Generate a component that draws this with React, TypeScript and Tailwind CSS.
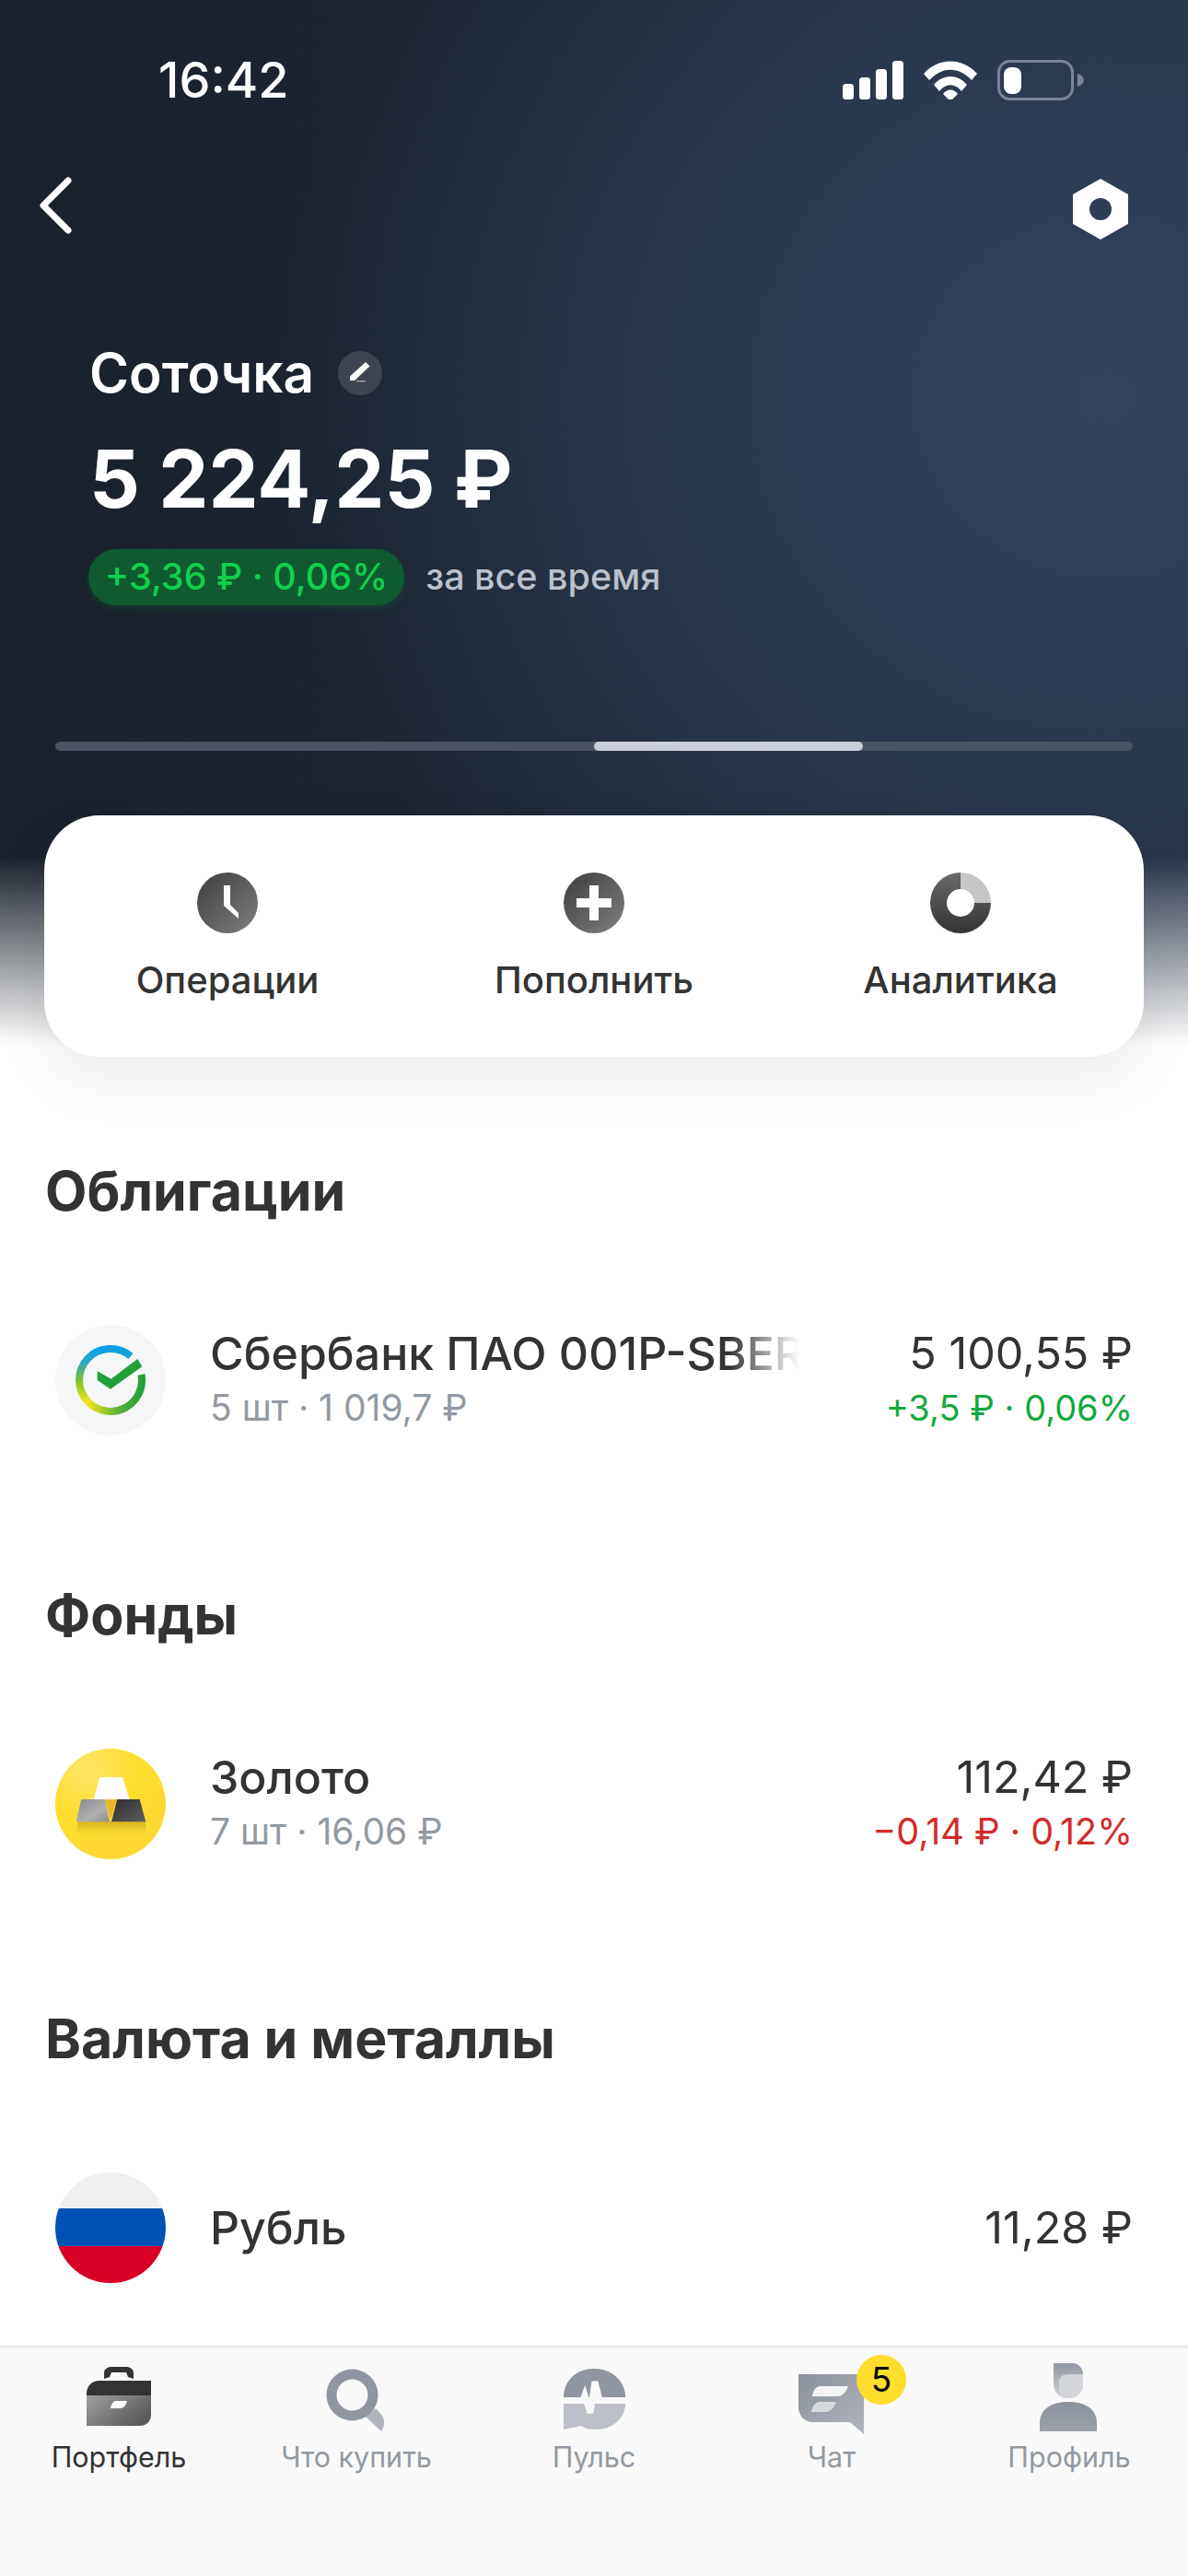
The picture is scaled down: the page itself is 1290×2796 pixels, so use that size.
const font = "font-['Inter','Noto_Sans',sans-serif]";

function StatusIcons() {
  return (
    <div className="flex items-center gap-[22px]">
      <svg width="66" height="42" viewBox="0 0 66 42" fill="#fff">
        <rect x="0" y="25" width="12" height="17" rx="3.5" />
        <rect x="18" y="18" width="12" height="24" rx="3.5" />
        <rect x="36" y="9" width="12" height="33" rx="3.5" />
        <rect x="54" y="0" width="12" height="42" rx="3.5" />
      </svg>
      <svg width="58" height="42" viewBox="0 0 58 42" fill="#fff">
        <path d="M0 14 C16 -4 42 -4 58 14 L52 21 C38 6 20 6 6 21 Z" />
        <path d="M11 26 C21 14 37 14 47 26 L41 33 C34 24 24 24 17 33 Z" />
        <path d="M21 36 C25 30 33 30 37 36 L29 44 Z" />
      </svg>
      <svg width="94" height="44" viewBox="0 0 94 44" fill="none">
        <rect x="1.5" y="1.5" width="80" height="41" rx="12" stroke="#7a8494" strokeWidth="3" />
        <rect x="7" y="8" width="19" height="29" rx="8" fill="#fff" />
        <path d="M87 15 C91 16 94 19 94 22 C94 25 91 28 87 29 Z" fill="#7a8494" />
      </svg>
    </div>
  );
}

function ClockIcon() {
  return (
    <svg width="66" height="66" viewBox="0 0 66 66">
      <defs>
        <linearGradient id="op" x1="0" y1="0" x2="1" y2="1">
          <stop offset="0" stopColor="#3d3d3f" />
          <stop offset="1" stopColor="#808082" />
        </linearGradient>
      </defs>
      <circle cx="33" cy="33" r="33" fill="url(#op)" />
      <path d="M29 14 H36 V35 L45 44 V50 L29 36 Z" fill="#fff" />
    </svg>
  );
}

function PlusIcon() {
  return (
    <svg width="66" height="66" viewBox="0 0 66 66">
      <defs>
        <linearGradient id="pl" x1="0" y1="0" x2="1" y2="1">
          <stop offset="0" stopColor="#3d3d3f" />
          <stop offset="1" stopColor="#808082" />
        </linearGradient>
      </defs>
      <circle cx="33" cy="33" r="33" fill="url(#pl)" />
      <path d="M28 14 H38 V28 H52 V38 H38 V52 H28 V38 H14 V28 H28 Z" fill="#fff" />
    </svg>
  );
}

function DonutIcon() {
  return (
    <svg width="66" height="66" viewBox="0 0 66 66">
      <defs>
        <linearGradient id="dn" x1="0" y1="0" x2="0" y2="1">
          <stop offset="0" stopColor="#6a6a6c" />
          <stop offset="1" stopColor="#333335" />
        </linearGradient>
      </defs>
      <path fillRule="evenodd" d="M33 0 V18 A15 15 0 1 0 48 33 H66 A33 33 0 1 1 33 0 Z" fill="url(#dn)" />
      <path d="M33 0 A33 33 0 0 1 66 33 H48 A15 15 0 0 0 33 18 Z" fill="#c6c6c6" />
    </svg>
  );
}

function SberLogo() {
  return (
    <svg width="120" height="120" viewBox="0 0 120 120" className="shrink-0">
      <defs>
        <linearGradient id="sa" x1="0" y1="0" x2="0" y2="1">
          <stop offset="0" stopColor="#0c9fe6" />
          <stop offset="0.25" stopColor="#2aa8c0" />
          <stop offset="0.6" stopColor="#7fc02c" />
          <stop offset="1" stopColor="#f0e61c" />
        </linearGradient>
        <linearGradient id="sc" x1="0" y1="0" x2="1" y2="0">
          <stop offset="0" stopColor="#f0e61c" />
          <stop offset="0.55" stopColor="#5cb23a" />
          <stop offset="1" stopColor="#21a038" />
        </linearGradient>
      </defs>
      <circle cx="60" cy="60" r="60" fill="#f4f6f7" />
      <path d="M82 34 A34 34 0 0 0 36 84" fill="none" stroke="url(#sa)" strokeWidth="8" />
      <path d="M36 84 A34 34 0 0 0 93.5 54" fill="none" stroke="url(#sc)" strokeWidth="8" />
      <path d="M45.7 50.3 L60.7 58.7 L89.3 37 L94.3 45.3 L60 69.7 L45.7 60 Z" fill="#21a038" />
    </svg>
  );
}

function GoldLogo() {
  return (
    <svg width="120" height="120" viewBox="0 0 120 120" className="shrink-0">
      <defs>
        <radialGradient id="gd" cx="0.3" cy="0.2" r="0.9">
          <stop offset="0" stopColor="#ffe566" />
          <stop offset="0.5" stopColor="#ffdd2d" />
          <stop offset="1" stopColor="#fdd835" />
        </radialGradient>
        <linearGradient id="gl" x1="0" y1="0" x2="1" y2="1">
          <stop offset="0" stopColor="#8a8a8c" />
          <stop offset="0.6" stopColor="#b0b0b2" />
          <stop offset="1" stopColor="#8e8e90" />
        </linearGradient>
        <linearGradient id="gr" x1="0" y1="0" x2="1" y2="1">
          <stop offset="0" stopColor="#2f2f31" />
          <stop offset="1" stopColor="#5e5e60" />
        </linearGradient>
        <linearGradient id="gs" x1="0" y1="0" x2="0" y2="1">
          <stop offset="0" stopColor="#7a5c00" stopOpacity="0.3" />
          <stop offset="1" stopColor="#7a5c00" stopOpacity="0" />
        </linearGradient>
      </defs>
      <circle cx="60" cy="60" r="60" fill="url(#gd)" />
      <rect x="24" y="79" width="74" height="14" fill="url(#gs)" />
      <path d="M48.3 31 H73 L80.7 55 H41.7 Z" fill="#fff" />
      <path d="M54 55 H67.3 L60 77 Z" fill="#e8b62c" />
      <path d="M28.3 55 H54 L59 79.3 H22.7 Z" fill="url(#gl)" />
      <path d="M67.3 55 H91.7 L98.3 79.3 H61 Z" fill="url(#gr)" />
    </svg>
  );
}

function FlagLogo() {
  return (
    <div className="w-[120px] h-[120px] rounded-full overflow-hidden flex flex-col shrink-0">
      <div className="h-[39px] bg-[#efefef]" />
      <div className="h-[41px] bg-[#0052b4]" />
      <div className="h-[40px] bg-[#d80027]" />
    </div>
  );
}

function PortfolioIcon() {
  return (
    <svg width="72" height="72" viewBox="0 0 72 72">
      <defs>
        <linearGradient id="pf" x1="0" y1="0" x2="1" y2="0.6">
          <stop offset="0" stopColor="#a0a0a0" />
          <stop offset="1" stopColor="#5a5a5c" />
        </linearGradient>
      </defs>
      <path d="M20 15 V9 C20 4 24 2 28 2 H44 C48 2 52 4 52 9 V15 L46 13 L44 8 H28 L26 13 Z" fill="#333335" />
      <path d="M15 17 H71 V33 H1 V31 C1 23 7 17 15 17 Z" fill="#333335" />
      <path d="M1 33 H71 V54 C71 61 66 66 59 66 H1 Z" fill="url(#pf)" />
      <path d="M33 39 H45 C44 44 41 47 37 47 H27 C28 42 30 39 33 39 Z" fill="#fff" />
    </svg>
  );
}

function SearchIcon() {
  return (
    <svg width="72" height="72" viewBox="0 0 72 72">
      <path d="M46 56 L57 47 L64 55 C67 60 67 66 63 72 Z" fill="#b0b4bd" />
      <path fillRule="evenodd" d="M31.5 4.5 A28 28 0 1 1 31.5 60.5 A28 28 0 1 1 31.5 4.5 Z M31.5 15.5 A17 17 0 1 0 31.5 49.5 A17 17 0 1 0 31.5 15.5 Z" fill="#8f96a1" />
    </svg>
  );
}

function PulseIcon() {
  return (
    <svg width="72" height="72" viewBox="0 0 72 72">
      <path d="M3 35 C3 17 17 4 36 4 C55 4 70 17 70 35 Z" fill="#8f96a1" />
      <path d="M3 42 H70 C70 58 56 70 38 70 C32 70 26 69 22 66 L3 70 Z" fill="#bcbfc7" />
      <path d="M0 38.5 H24 L26 33 L32 52 L37 18 L42 38.5 H72" fill="none" stroke="#f9f9f9" strokeWidth="7" />
    </svg>
  );
}

function ChatIcon() {
  return (
    <svg width="72" height="78" viewBox="0 0 72 78">
      <defs>
        <linearGradient id="ch" x1="0" y1="0" x2="1" y2="1">
          <stop offset="0" stopColor="#8b929d" />
          <stop offset="1" stopColor="#b0b4bc" />
        </linearGradient>
      </defs>
      <path d="M0 13 H66 C69 13 71 15 71 18 V78 L56 65 H16 C7 65 0 58 0 49 Z" fill="url(#ch)" />
      <path d="M24 26 H54 C52 32 48 37 42 37 H15 C16 31 18 26 24 26 Z" fill="#f5f5f5" />
      <path d="M23 43 H41 C39 49 35 54 29 54 H14 C15 48 18 43 23 43 Z" fill="#d8dade" />
    </svg>
  );
}

function ProfileIcon() {
  return (
    <svg width="72" height="78" viewBox="0 0 72 78">
      <defs>
        <linearGradient id="prh" x1="0" y1="0" x2="0" y2="1">
          <stop offset="0" stopColor="#8f96a1" />
          <stop offset="1" stopColor="#d3d5da" />
        </linearGradient>
        <linearGradient id="prb" x1="0" y1="0" x2="0" y2="1">
          <stop offset="0" stopColor="#8b919c" />
          <stop offset="1" stopColor="#9ca2ac" />
        </linearGradient>
      </defs>
      <path d="M19 1 H39 C46 1 51 6 51 13 V24 C51 33 44 39 35 39 C26 39 19 33 19 24 Z" fill="url(#prh)" />
      <path d="M25 22 C25 16 29 13 35 13 H51 V24 C51 33 44 39 35 39 C29 39 25 34 25 28 Z" fill="#d3d5da" />
      <path d="M35 43 C52 43 66 50 66 66 V75 H4 V66 C4 50 18 43 35 43 Z" fill="url(#prb)" />
    </svg>
  );
}

function Tab({ label, active, icon, badge }: { label: string; active?: boolean; icon: React.ReactNode; badge?: string }) {
  return (
    <div className="w-[258px] flex flex-col items-center">
      <div className="relative w-[72px] h-[78px] flex items-center justify-center">
        {icon}
        {badge && (
          <span className="absolute left-[63px] top-[-8px] w-[54px] h-[54px] rounded-full bg-[#ffdd2d] flex items-center justify-center text-[37px] text-black">
            {badge}
          </span>
        )}
      </div>
      <span className={`mt-[5px] text-[30.5px] leading-[40px] ${active ? 'text-[#333333]' : 'text-[#9299a2]'}`}>{label}</span>
    </div>
  );
}

function Action({ label, icon }: { label: string; icon: React.ReactNode }) {
  return (
    <div className="flex-1 flex flex-col items-center">
      {icon}
      <span className="mt-[27px] text-[40px] leading-[48px] font-medium text-[#333333]">{label}</span>
    </div>
  );
}

function Section({ title, logo, name, sub, value, change, up, fade }: {
  title: string;
  logo: React.ReactNode;
  name: string;
  sub?: string;
  value: string;
  change?: string;
  up?: boolean;
  fade?: boolean;
}) {
  return (
    <section className="pl-[49px] pr-[60px] h-[460px] shrink-0">
      <h2 className="text-[59px] leading-[66px] font-bold text-[#333333]">{title}</h2>
      <div className="mt-[112px] pl-[11px] flex items-center h-[120px]">
        {logo}
        <div className="ml-[48px] w-[640px] overflow-hidden">
          <div className={`text-[50px] leading-[60px] font-medium text-[#333333] whitespace-nowrap ${fade ? '[mask-image:linear-gradient(to_right,black_88%,transparent_100%)]' : ''}`}>
            {name}
          </div>
          {sub && <div className="text-[39px] leading-[58px] text-[#9299a2]">{sub}</div>}
        </div>
        <div className="ml-auto text-right">
          <div className="text-[48.5px] leading-[60px] text-[#333333]">{value}</div>
          {change && <div className={`leading-[58px] ${up ? 'text-[38px] text-[#12a83e]' : 'text-[39.5px] text-[#d32a2a]'}`}>{change}</div>}
        </div>
      </div>
    </section>
  );
}

export default function App() {
  return (
    <div className={`${font} w-[1290px] h-[2796px] flex flex-col overflow-hidden bg-[linear-gradient(to_bottom,transparent_930px,white_1135px),radial-gradient(ellipse_900px_850px_at_1200px_430px,#33445e_0%,#2a384d_50%,transparent_100%),linear-gradient(to_right,#19212c,#1f2a3a)]`}>
      <div className="flex-1 min-h-0 overflow-hidden">
        <div className="pt-[60px] pl-[172px] pr-[113px] h-[114px] flex items-center justify-between">
          <span className="text-[54px] leading-[54px] font-medium text-white">16:42</span>
          <StatusIcons />
        </div>

        <div className="mt-[78px] pl-[42px] pr-[65px] flex items-center justify-between h-[70px]">
          <svg width="36" height="62" viewBox="0 0 36 62" fill="none" className="mb-[8px]">
            <path d="M32 4 L5 31 L32 58" stroke="#fff" strokeWidth="7" strokeLinecap="round" strokeLinejoin="round" />
          </svg>
          <svg width="60" height="66" viewBox="0 0 60 66">
            <path fillRule="evenodd" d="M30 0 L60 17 V49 L30 66 L0 49 V17 Z M30 21 A12 12 0 1 0 30 45 A12 12 0 1 0 30 21 Z" fill="#fff" />
          </svg>
        </div>

        <div className="mt-[111px] pl-[97px]">
          <div className="flex items-center h-[64px]">
            <span className="text-[58.5px] leading-[64px] font-semibold text-white">Соточка</span>
            <span className="ml-[26px] w-[48px] h-[48px] rounded-full bg-[#3f4550] flex items-center justify-center">
              <svg width="48" height="48" viewBox="0 0 48 48">
                <path d="M30 12 L34.5 16.5 L18 32 H13 V27.5 Z" fill="#fff" />
                <path d="M20 32 H30 V33.5 H20 Z" fill="#9aa0aa" />
              </svg>
            </span>
          </div>
          <div className="mt-[33px] text-[86px] leading-[100px] font-bold text-white">5 224,25 ₽</div>
          <div className="mt-[26px] flex items-center">
            <span className="ml-[-1px] h-[61px] px-[18px] rounded-full bg-[#0f5a30] shadow-[0_3px_6px_rgba(15,90,48,0.5)] flex items-center text-[39.5px] font-medium text-[#12cf4f]">
              +3,36 ₽ · 0,06%
            </span>
            <span className="ml-[23px] text-[39.5px] font-medium text-[#bcc1ca]">за все время</span>
          </div>
        </div>

        <div className="mt-[148px] mx-[60px] h-[10px] rounded-full bg-[#4a5361] flex">
          <div className="ml-[585px] w-[292px] h-[10px] rounded-full bg-[#c9ced8]" />
        </div>

        <div className="mt-[70px] mx-[48px] h-[262px] rounded-[60px] bg-white shadow-[0_24px_60px_rgba(0,0,0,0.08)] flex pt-[62px]">
          <Action label="Операции" icon={<ClockIcon />} />
          <Action label="Пополнить" icon={<PlusIcon />} />
          <Action label="Аналитика" icon={<DonutIcon />} />
        </div>

        <div className="mt-[113px]">
          <Section title="Облигации" logo={<SberLogo />} name="Сбербанк ПАО 001P-SBER" sub="5 шт · 1 019,7 ₽" value="5 100,55 ₽" change="+3,5 ₽ · 0,06%" up fade />
          <Section title="Фонды" logo={<GoldLogo />} name="Золото" sub="7 шт · 16,06 ₽" value="112,42 ₽" change="−0,14 ₽ · 0,12%" />
          <Section title="Валюта и металлы" logo={<FlagLogo />} name="Рубль" value="11,28 ₽" />
        </div>
      </div>

      <nav className="h-[250px] shrink-0 border-t-2 border-[#e4e4e6] bg-[#f9f9f9] flex pt-[16px]">
        <Tab label="Портфель" active icon={<PortfolioIcon />} />
        <Tab label="Что купить" icon={<SearchIcon />} />
        <Tab label="Пульс" icon={<PulseIcon />} />
        <Tab label="Чат" icon={<ChatIcon />} badge="5" />
        <Tab label="Профиль" icon={<ProfileIcon />} />
      </nav>
    </div>
  );
}
